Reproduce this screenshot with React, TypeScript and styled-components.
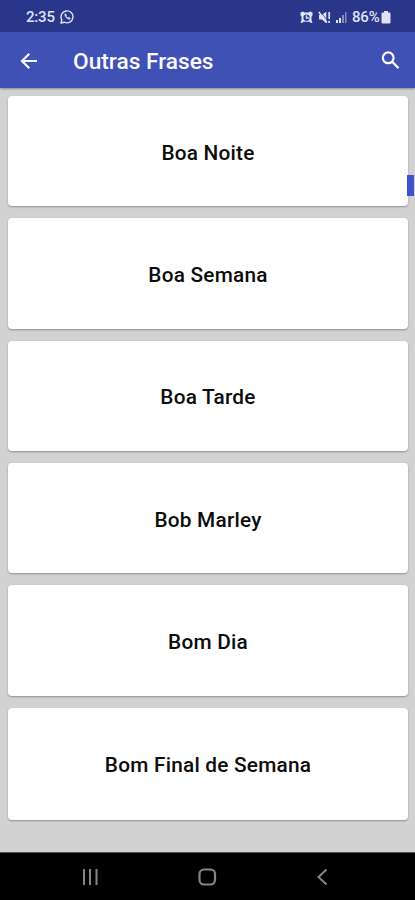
import React from 'react';
import styled, { createGlobalStyle } from 'styled-components';

const GlobalStyle = createGlobalStyle`
  * { box-sizing: border-box; }
  body { margin: 0; background: #d2d2d2; font-family: Roboto, sans-serif; }
`;

const Screen = styled.div`
  position: relative;
  display: flex;
  flex-direction: column;
  height: 900px;
  overflow: hidden;
  background: #d2d2d2;
`;

const StatusBar = styled.header`
  display: flex;
  flex: 0 0 32px;
  align-items: center;
  justify-content: space-between;
  padding: 2px 24px 0 26px;
  background: #2a3689;
  color: #dfe2f5;
  font-size: 15px;
  font-weight: 500;
  line-height: 18px;
`;

const StatusGroup = styled.div<{ $gap: number }>`
  display: flex;
  align-items: center;
  gap: ${({ $gap }) => $gap}px;
`;

const StatusText = styled.span<{ $width: number }>`
  width: ${({ $width }) => $width}px;
  letter-spacing: -0.2px;
  white-space: nowrap;
`;

const Toolbar = styled.div`
  display: flex;
  flex: 0 0 56px;
  align-items: center;
  padding: 1px 12px 0 17px;
  background: #3f51b5;
  color: #fafaff;
  box-shadow: 0 1px 2px rgba(0, 0, 0, 0.35);
`;

const Title = styled.h1`
  flex: 1;
  margin: 2px 0 0 32px;
  font-size: 22.7px;
  font-weight: 500;
  line-height: 28px;
`;

const Icon = styled.svg`
  display: block;
  flex: none;
`;

const List = styled.main`
  display: grid;
  flex: 1;
  grid-template-rows: repeat(5, 110.35px) 112px;
  align-content: start;
  row-gap: 12px;
  padding: 8px 7px 0 8px;
`;

const Card = styled.section`
  display: flex;
  align-items: center;
  justify-content: center;
  padding-top: 3px;
  background: #fff;
  border-radius: 4px;
  box-shadow: 0 1px 2px rgba(0, 0, 0, 0.32);
  color: #0c0c0c;
  font-size: 20.8px;
  font-weight: 500;
  letter-spacing: 0.22px;
`;

const ScrollThumb = styled.div`
  position: absolute;
  top: 175px;
  right: 1px;
  width: 7px;
  height: 21px;
  background: #3f51cb;
`;

const NavBar = styled.nav`
  display: flex;
  flex: 0 0 48px;
  align-items: center;
  justify-content: space-between;
  padding: 1px 85px 0 80px;
  border-top: 1px solid #555;
  background: #000;
`;

const phrases = ['Boa Noite', 'Boa Semana', 'Boa Tarde', 'Bob Marley', 'Bom Dia', 'Bom Final de Semana'];

const MessengerIcon = () => (
  <Icon width="14" height="14" viewBox="0 0 14 14" fill="none" stroke="currentColor">
    <path d="M1 13l.8-3.2A6 6 0 1 1 4.3 12.2z" strokeWidth="1.4" strokeLinejoin="round" />
    <path d="M4.7 4.2c.2 2.8 2.2 4.8 4.9 5.2l.7-1.2-1.6-.9-.8.6C6.8 7.4 6.4 6.8 6 6l.5-.8-.6-1.4z" fill="currentColor" strokeWidth=".5" />
  </Icon>
);

const AlarmIcon = () => (
  <Icon width="13" height="13" viewBox="0 0 13 13">
    <path d="M.5 1.5L3 .5l1.500 1h4L10 .5l2.500 1v3l-1 1v3.500l1 3-2-.3-1-1h-6l-1 1-2 .3 1-3V5.500l-1-1z" fill="currentColor" />
    <circle cx="6.5" cy="6.7" r="3.1" fill="#2a3689" />
    <path d="M6.5 4.3V7h2.3" stroke="currentColor" strokeWidth="1.4" fill="none" />
  </Icon>
);

const MutedIcon = () => (
  <Icon width="13" height="13" viewBox="0 0 13 13">
    <path d="M1 4h2.5L8.3 .7v11.500L4 8.5H1z" fill="currentColor" />
    <path d="M2 .5l8 9.5" stroke="#2a3689" strokeWidth=".8" />
    <path d="M.8 1l8 10.500" stroke="currentColor" strokeWidth="1.6" />
    <path d="M11.2 1v7M11.2 9.7v2.3" stroke="currentColor" strokeWidth="1.7" />
  </Icon>
);

const SignalIcon = () => (
  <Icon width="11" height="12" viewBox="0 0 11 12" fill="currentColor">
    <path d="M0 9h2v3H0zM3 7h2v5H3z" />
    <path d="M6 4h2v8H6zM9 1h1.500v11H9z" opacity=".5" />
  </Icon>
);

const BatteryIcon = () => (
  <Icon width="10" height="13" viewBox="0 0 10 13" fill="currentColor">
    <path d="M3 0h4v1.5h1.500q1 0 1 1V11.500q0 1-1 1H1.500q-1 0-1-1V2.500q0-1 1-1H3z" />
  </Icon>
);

const BackIcon = () => (
  <Icon width="24" height="24" viewBox="0 0 24 24" fill="none" stroke="currentColor" strokeWidth="2.2">
    <path d="M20 12H5.5M12.3 4.7L5 12l7.3 7.3" />
  </Icon>
);

const SearchIcon = () => (
  <Icon width="24" height="24" viewBox="0 0 24 24" fill="none" stroke="currentColor" strokeWidth="2.2">
    <circle cx="9.2" cy="8.8" r="5.4" />
    <path d="M13.2 12.8l6.3 6.3" />
  </Icon>
);

export default function App() {
  return (
    <>
      <GlobalStyle />
      <Screen>
        <StatusBar>
          <StatusGroup $gap={5}>
            <StatusText $width={29}>2:35</StatusText>
            <MessengerIcon />
          </StatusGroup>
          <StatusGroup $gap={5}>
            <AlarmIcon />
            <MutedIcon />
            <SignalIcon />
            <StatusGroup $gap={1}>
              <StatusText $width={28}>86%</StatusText>
              <BatteryIcon />
            </StatusGroup>
          </StatusGroup>
        </StatusBar>
        <Toolbar>
          <BackIcon />
          <Title>Outras Frases</Title>
          <SearchIcon />
        </Toolbar>
        <List>
          {phrases.map((phrase) => (
            <Card key={phrase}>{phrase}</Card>
          ))}
        </List>
        <ScrollThumb />
        <NavBar>
          <Icon width="20" height="18" viewBox="0 0 20 18" fill="none" stroke="#858585" strokeWidth="2">
            <path d="M4 1v16M10 1v16M16.5 1v16" />
          </Icon>
          <Icon width="20" height="18" viewBox="0 0 20 18" fill="none" stroke="#858585" strokeWidth="2.2">
            <rect x="1.5" y="1.5" width="15.5" height="15" rx="4.5" />
          </Icon>
          <Icon width="15" height="18" viewBox="0 0 15 18" fill="none" stroke="#858585" strokeWidth="2">
            <path d="M11.5 1.5L3.5 9l8 7.5" />
          </Icon>
        </NavBar>
      </Screen>
    </>
  );
}
